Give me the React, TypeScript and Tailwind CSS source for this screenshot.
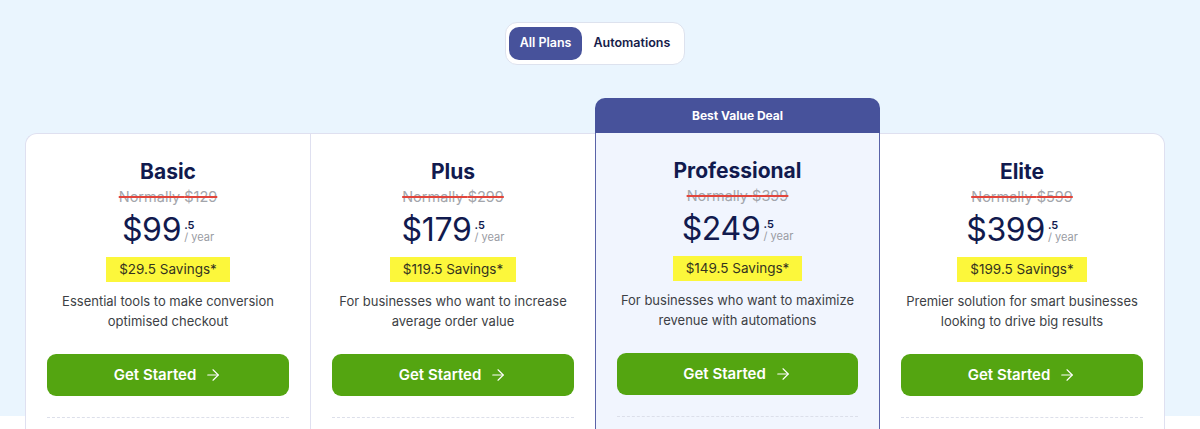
import React from 'react';
import { ArrowRight } from 'lucide-react';

interface Plan {
  name: string;
  normal: string;
  price: string;
  savings: string;
  desc: string[];
  featured?: boolean;
}

const plans: Plan[] = [
  {
    name: 'Basic',
    normal: '$129',
    price: '$99',
    savings: '$29.5 Savings*',
    desc: ['Essential tools to make conversion', 'optimised checkout'],
  },
  {
    name: 'Plus',
    normal: '$299',
    price: '$179',
    savings: '$119.5 Savings*',
    desc: ['For businesses who want to increase', 'average order value'],
  },
  {
    name: 'Professional',
    normal: '$399',
    price: '$249',
    savings: '$149.5 Savings*',
    desc: ['For businesses who want to maximize', 'revenue with automations'],
    featured: true,
  },
  {
    name: 'Elite',
    normal: '$599',
    price: '$399',
    savings: '$199.5 Savings*',
    desc: ['Premier solution for smart businesses', 'looking to drive big results'],
  },
];

const PlanBody: React.FC<{ plan: Plan }> = ({ plan }) => (
  <div className="flex flex-col items-center px-[21px] pt-[24px] pb-[40px] text-center">
    <h3 className="text-[21px] leading-[28px] font-bold text-[#111a4e]">{plan.name}</h3>
    <p className="text-[14.5px] leading-[22px] text-[#a3a5ab] line-through decoration-[#e2453c] decoration-[1.5px]">
      Normally {plan.normal}
    </p>
    <div className="flex h-[44px] items-center">
      <span className="text-[32px] leading-none text-[#111a4e] tracking-[-0.3px]">{plan.price}</span>
      <div className="ml-[3px] flex flex-col items-start pt-[1px]">
        <span className="text-[11px] leading-[12px] font-semibold text-[#111a4e]">.5</span>
        <span className="text-[11px] leading-[12px] text-[#9a9ca3]">/ year</span>
      </div>
    </div>
    <div className="mt-[5px] h-[25px] bg-[#fcf73b] px-[13px] text-[13.5px] leading-[25px] text-[#34331f]">
      {plan.savings}
    </div>
    <div className="mt-[9px] text-[13px] leading-[20px] text-[#3d3f45]">
      {plan.desc.map((line) => (
        <p key={line}>{line}</p>
      ))}
    </div>
    <button className="mt-[23px] flex h-[42px] w-full items-center justify-center gap-[8px] rounded-[9px] bg-[#54a511] text-[15px] font-semibold text-white">
      Get Started
      <ArrowRight size={18} strokeWidth={1.5} />
    </button>
    <div className="mt-[21px] w-full border-t border-dashed border-[#dcdfea]" />
    <div className="h-[60px]" />
  </div>
);

export default function App() {
  return (
    <div
      className="min-h-screen bg-[linear-gradient(to_bottom,#eaf5fe_416px,#ffffff_416px)]"
      style={{ fontFamily: 'Inter, "Noto Sans", sans-serif' }}
    >
      <div className="w-[1190px]">
        <div className="flex justify-center pt-[22px]">
          <div className="flex h-[43px] items-center gap-[11px] rounded-[12px] border border-[#dde2ee] bg-white pl-[3px] pr-[14px]">
            <button className="h-[33px] rounded-[10px] bg-[#47529b] px-[11px] text-[12.5px] font-semibold text-white">
              All Plans
            </button>
            <button className="text-[12.5px] font-semibold text-[#161c4a]">Automations</button>
          </div>
        </div>

        <div className="mx-auto mt-[33px] grid w-[1140px] grid-cols-4">
          {plans.map((plan, i) => {
            if (plan.featured) {
              return (
                <div key={plan.name} className="flex flex-col">
                  <div className="flex h-[35px] items-center justify-center rounded-t-[10px] bg-[#47529b] text-[12px] font-bold text-white">
                    Best Value Deal
                  </div>
                  <div className="flex-1 border-x border-b border-[#5a63a8] bg-[#f1f5fe]">
                    <PlanBody plan={plan} />
                  </div>
                </div>
              );
            }
            const edge =
              i === 0
                ? 'border-l rounded-tl-[12px]'
                : i === plans.length - 1
                ? 'border-r rounded-tr-[12px]'
                : 'border-l';
            return (
              <div key={plan.name} className={`mt-[35px] border-t border-[#dfe0f0] bg-white ${edge}`}>
                <PlanBody plan={plan} />
              </div>
            );
          })}
        </div>
      </div>
    </div>
  );
}
